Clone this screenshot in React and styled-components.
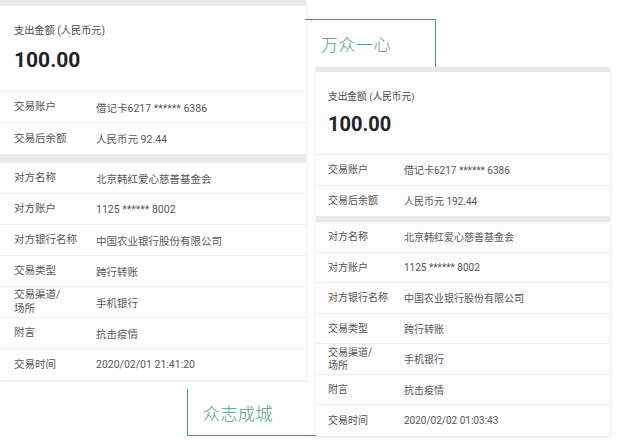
import styled, { createGlobalStyle } from "styled-components";

const Global = createGlobalStyle`
  body {
    margin: 0;
    background: #ffffff;
    font-family: Roboto, "Noto Sans CJK SC", sans-serif;
  }
`;

const Page = styled.div`
  display: flex;
  align-items: flex-start;
  width: 626px;
  height: 444px;
  overflow: hidden;
`;

const Column = styled.div`
  display: flex;
  flex-direction: column;
  align-items: flex-start;
  flex-shrink: 0;
  width: ${(p) => (p.$w ? `${p.$w}px` : "auto")};
`;

const Card = styled.div`
  width: ${(p) => p.$w}px;
  margin-left: ${(p) => p.$offset || 0}px;
  background: ${(p) => p.$bg};
  box-shadow: 0 1px 3px rgba(0, 0, 0, 0.12);
`;

const Band = styled.div`
  height: ${(p) => p.$h}px;
  background: #e9e9ea;
`;

const Header = styled.div`
  height: ${(p) => p.$h}px;
  box-sizing: border-box;
  padding-left: ${(p) => p.$pad}px;
  padding-top: ${(p) => p.$top}px;
  border-bottom: 1px solid #f0f0f0;
`;

const HeaderLabel = styled.div`
  font-size: ${(p) => p.$fs}px;
  color: #4a4a4a;
  line-height: 14px;
`;

const Amount = styled.div`
  margin-top: ${(p) => p.$gap}px;
  font-size: ${(p) => p.$fs}px;
  font-weight: 700;
  color: #222;
  line-height: 24px;
`;

const Row = styled.div`
  display: flex;
  align-items: center;
  height: ${(p) => p.$h}px;
  box-sizing: border-box;
  padding-left: ${(p) => p.$pad}px;
  font-size: ${(p) => p.$fs}px;
  color: #555;
  border-bottom: 1px solid #f0f0f0;
  &:last-child {
    border-bottom: none;
  }
`;

const Label = styled.div`
  width: ${(p) => p.$w}px;
  flex-shrink: 0;
  line-height: 1.3;
`;

const Value = styled.div`
  color: #585858;
`;

const Tag = styled.div`
  box-sizing: border-box;
  flex-shrink: 0;
  width: ${(p) => p.$w}px;
  height: ${(p) => p.$h}px;
  margin-top: ${(p) => p.$mt}px;
  margin-left: ${(p) => p.$ml}px;
  display: flex;
  align-items: center;
  padding-left: ${(p) => p.$pl}px;
  font-size: 17px;
  font-weight: 300;
  color: #4f9a8d;
  letter-spacing: 0.5px;
  border-color: #3a9488;
  border-style: solid;
  border-width: ${(p) => p.$borders};
`;

const topRows = (balance) => [
  ["交易账户", "借记卡6217 ****** 6386"],
  ["交易后余额", `人民币元 ${balance}`],
];

const bottomRows = (time) => [
  ["对方名称", "北京韩红爱心慈善基金会"],
  ["对方账户", "1125 ****** 8002"],
  ["对方银行名称", "中国农业银行股份有限公司"],
  ["交易类型", "跨行转账"],
  [
    <>
      交易渠道/
      <br />
      场所
    </>,
    "手机银行",
  ],
  ["附言", "抗击疫情"],
  ["交易时间", time],
];

function Receipt({ s, balance, time }) {
  const renderRow = ([label, value], i) => (
    <Row key={i} $h={s.rowH} $pad={s.pad} $fs={s.fs}>
      <Label $w={s.labelW}>{label}</Label>
      <Value>{value}</Value>
    </Row>
  );
  return (
    <Card $w={s.w} $offset={s.offset} $bg={s.bg}>
      <Band $h={s.band1} />
      <Header $h={s.headerH} $pad={s.pad} $top={s.headerTop}>
        <HeaderLabel $fs={s.fs - 0.3}>支出金额 (人民币元)</HeaderLabel>
        <Amount $fs={s.amountFs} $gap={s.amountGap}>
          100.00
        </Amount>
      </Header>
      <div>{topRows(balance).map(renderRow)}</div>
      <Band $h={s.band2} />
      <div>{bottomRows(time).map(renderRow)}</div>
    </Card>
  );
}

const leftSize = {
  w: 306,
  offset: 0,
  bg: "#ffffff",
  band1: 6,
  headerH: 86,
  headerTop: 18,
  amountGap: 10,
  amountFs: 21,
  pad: 14,
  fs: 10.5,
  labelW: 82,
  rowH: 31,
  band2: 9,
};

const rightSize = {
  w: 294,
  offset: 10,
  bg: "#fcfcfd",
  band1: 5,
  headerH: 83,
  headerTop: 18,
  amountGap: 8,
  amountFs: 20,
  pad: 12,
  fs: 10,
  labelW: 76,
  rowH: 30.5,
  band2: 6,
};

export default function App() {
  return (
    <Page>
      <Global />
      <Column $w={306}>
        <Receipt s={leftSize} balance="92.44" time="2020/02/01 21:41:20" />
        <Tag $w={130} $h={47} $mt={9} $ml={187} $pl={15} $borders="0 0 1px 1px">
          众志成城
        </Tag>
      </Column>
      <Column>
        <Tag $w={131} $h={48} $mt={19} $ml={-1} $pl={16} $borders="1px 1px 0 0">
          万众一心
        </Tag>
        <Receipt s={rightSize} balance="192.44" time="2020/02/02 01:03:43" />
      </Column>
    </Page>
  );
}
